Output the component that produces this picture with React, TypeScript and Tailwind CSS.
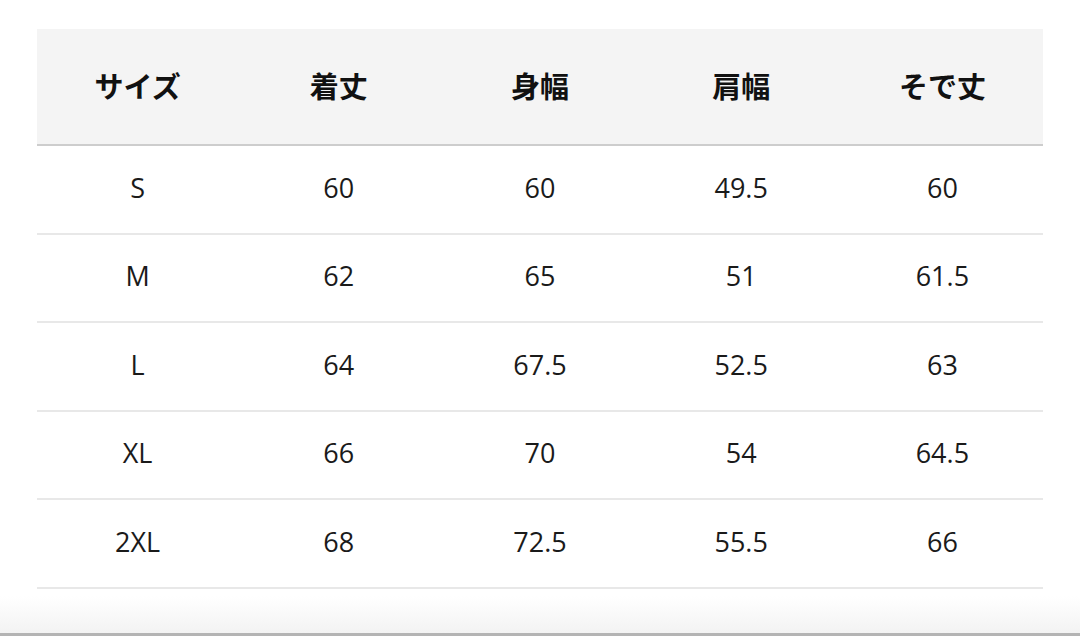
import React from 'react';

const headers = ['サイズ', '着丈', '身幅', '肩幅', 'そで丈'];

const rows = [
  ['S', '60', '60', '49.5', '60'],
  ['M', '62', '65', '51', '61.5'],
  ['L', '64', '67.5', '52.5', '63'],
  ['XL', '66', '70', '54', '64.5'],
  ['2XL', '68', '72.5', '55.5', '66'],
];

export default function App() {
  return (
    <div className="w-[1080px] h-[636px] bg-white overflow-hidden flex flex-col">
      <div className="pt-[29px] pl-[37px] w-[1043px]">
        <div className="grid grid-cols-5 h-[117px] bg-[#f4f4f4] border-b-2 border-[#cdcdcd] items-center">
          {headers.map((h) => (
            <div
              key={h}
              className="text-center text-[29px] font-bold text-[#111] font-['Noto_Sans_CJK_JP',sans-serif] pb-[2px]"
            >
              {h}
            </div>
          ))}
        </div>
        {rows.map((row) => (
          <div
            key={row[0]}
            className="grid grid-cols-5 h-[88.6px] border-b-2 border-[#e8e8e8] items-center"
          >
            {row.map((cell, i) => (
              <div
                key={i}
                className="text-center text-[27px] text-[#1a1a1a] font-['Open_Sans',sans-serif] pb-[3px]"
              >
                {cell}
              </div>
            ))}
          </div>
        ))}
      </div>
      <div className="flex-1 flex flex-col">
        <div className="h-[7px]" />
        <div className="flex-1 bg-gradient-to-b from-white to-[#f3f3f3] border-b-[3px] border-[#b4b4b4]" />
      </div>
    </div>
  );
}
